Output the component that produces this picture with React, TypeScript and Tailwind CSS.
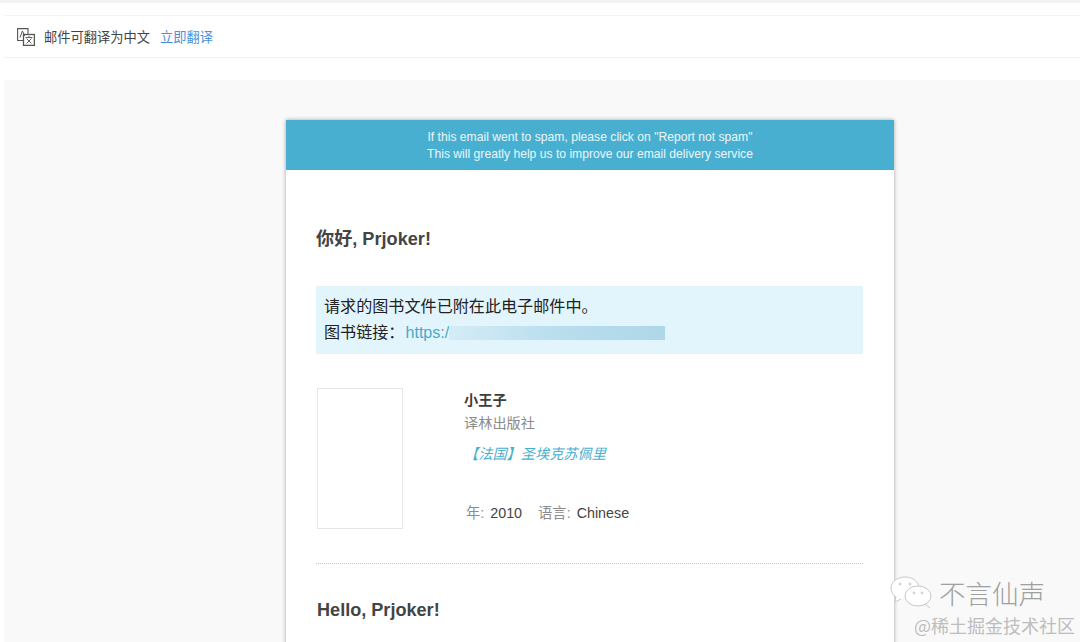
const sans = { fontFamily: '"Liberation Sans", "Noto Sans CJK SC", sans-serif' };

function TranslateIcon() {
  return (
    <svg width="18" height="18" viewBox="0 0 18 18" fill="none" stroke="#555" strokeWidth="1.1">
      <path d="M6 12.5H.6V.6H11V6" />
      <rect x="6.5" y="6.5" width="10.9" height="10.9" fill="#fff" strokeWidth="1.3" />
      <path d="M3 9.5l2.4-6.5 2.4 5" strokeWidth="1" />
      <path d="M8.5 9.5h7M9.5 15.5l5-5M9.5 10.5l5 5M12 8v1.5" strokeWidth="0.9" />
    </svg>
  );
}

function WechatMark() {
  return (
    <svg width="44" height="34" viewBox="0 0 44 34" fill="none" stroke="#c8c8c8" strokeWidth="1">
      <path d="M29 10C27 4 21 1 15 1 7 1 1 6 1 12c0 4 2 7 5 9l-1 5 6-3" fill="#fff" />
      <circle cx="10" cy="8" r="1" />
      <circle cx="20" cy="8" r="1" />
      <ellipse cx="28" cy="20" rx="13" ry="10" fill="#fff" />
      <path d="M35 28l5 4" />
      <circle cx="24" cy="17" r="1" />
      <circle cx="32" cy="17" r="1" />
    </svg>
  );
}

export default function App() {
  return (
    <div className="relative h-[642px] w-[1080px] overflow-hidden bg-white" style={sans}>
      <div className="h-[3px] bg-[#f3f3f3]" />
      <div className="mt-3 ml-1 flex h-[43px] items-center border-y border-[#f3f3f3] pl-[13px] text-[13.25px]">
        <TranslateIcon />
        <span className="mt-[2px] ml-[9px] text-[#444]">邮件可翻译为中文</span>
        <span className="mt-[2px] ml-[10px] text-[#4a90d9]">立即翻译</span>
      </div>

      <div className="mt-[22px] ml-1 h-[600px] bg-[#f9f9f9] pt-10 pl-[282px]">
        <div className="h-[560px] w-[608px] bg-white shadow-[0_0_4px_rgba(0,0,0,0.35)]">
          <div className="flex h-[50px] flex-col items-center justify-center bg-[#49afd0] pt-px text-[12.15px] leading-[17px] text-[#eaf6fa]">
            <p>If this email went to spam, please click on "Report not spam"</p>
            <p>This will greatly help us to improve our email delivery service</p>
          </div>

          <div className="px-[30px]">
            <h2 className="mt-[57px] text-[18.15px] leading-[24px] font-bold text-[#444]">你好, Prjoker!</h2>

            <div className="mt-[35px] flex h-[68px] w-[547px] flex-col justify-center bg-[#e2f5fc] pb-[2px] pl-2 text-[16.1px] leading-[26px] text-[#222]">
              <p>请求的图书文件已附在此电子邮件中。</p>
              <p className="flex items-center">
                图书链接：<span className="ml-px text-[#49a9c9]">https:/</span>
                <span className="mt-[2px] h-[14px] w-[216px] bg-gradient-to-r from-[#d4ecf6] via-[#b9deee] to-[#aed7e8]" />
              </p>
            </div>

            <div className="mt-[34px] flex pl-px">
              <div className="h-[141px] w-[86px] border border-[#e6e6e6] bg-white" />
              <div className="ml-[61px] flex flex-col pt-[2px]">
                <p className="text-[14.2px] leading-[20px] font-bold text-[#3d3d3d]">小王子</p>
                <p className="mt-[3px] text-[14.2px] leading-[20px] text-[#8c8c8c]">译林出版社</p>
                <p className="mt-[11px] text-[14.2px] leading-[20px] text-[#49afd0] italic">【法国】圣埃克苏佩里</p>
                <p className="mt-[39px] pl-[2px] text-[14.3px] leading-[20px] text-[#8c8c8c]">
                  年: <span className="ml-[2px] text-[#444]">2010</span>
                  <span className="ml-4">语言:</span> <span className="ml-[2px] text-[#444]">Chinese</span>
                </p>
              </div>
            </div>

            <div className="mt-[34px] w-[547px] border-t border-dotted border-[#c4c4c4]" />
            <h2 className="mt-[34px] pl-px text-[18.1px] leading-[24px] font-bold text-[#444]">Hello, Prjoker!</h2>
          </div>
        </div>
      </div>

      <div className="absolute top-[576px] left-[890px] flex items-center gap-[5px]">
        <WechatMark />
        <span className="text-[26.5px] leading-[34px] font-light text-[#a0a0a0]" style={{ fontFamily: '"Noto Sans CJK SC", sans-serif' }}>不言仙声</span>
      </div>
      <div className="absolute top-[614px] left-[914px] text-[18px] leading-[22px] text-[#bdbdbd]" style={{ fontFamily: '"Noto Sans CJK SC", sans-serif' }}>@稀土掘金技术社区</div>
    </div>
  );
}
